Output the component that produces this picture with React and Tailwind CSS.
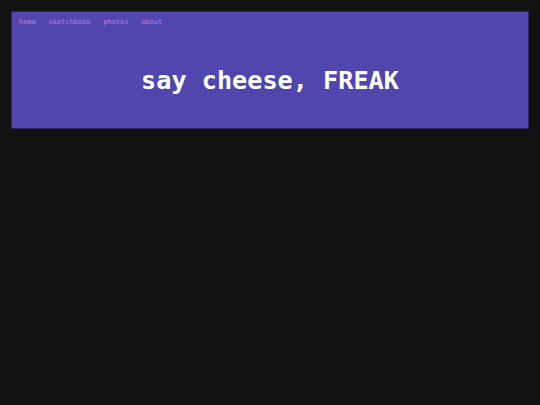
export default function App() {
  return (
    <div className="min-h-[405px] bg-[#111111] p-[11px]" style={{ fontFamily: '"DejaVu Sans Mono", monospace' }}>
      <div className="h-[118px] border border-[#2e2866] bg-[#5046ad] flex flex-col">
        <nav className="flex gap-[12.6px] px-[7px] pt-[5px] text-[7px] leading-[10px] text-[#c77be8]">
          <a>home</a>
          <a>sketchbook</a>
          <a>photos</a>
          <a>about</a>
        </nav>
        <div className="flex-1 flex items-center justify-center pt-[6px]">
          <h1 className="text-[25.2px] font-bold text-white leading-none">say cheese, FREAK</h1>
        </div>
      </div>
    </div>
  );
}
